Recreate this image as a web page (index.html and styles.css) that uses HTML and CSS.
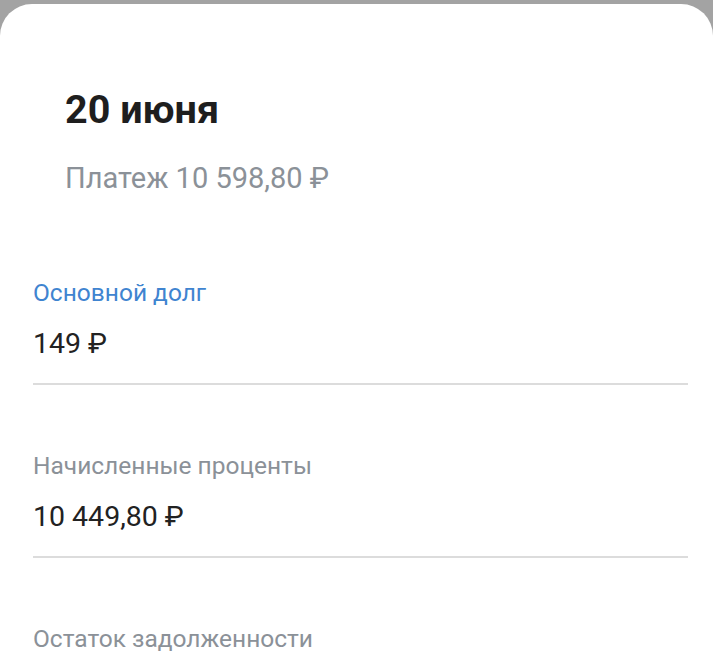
FILE: index.html
```html
<!DOCTYPE html>
<html lang="ru">
<head>
    <meta charset="UTF-8">
    <meta name="viewport" content="width=device-width, initial-scale=1.0">
    <title>Платеж 20 июня</title>
    <link rel="stylesheet" href="styles.css">
</head>
<body>
    <div class="sheet">
        <div class="header">
            <h1 class="date">20 июня</h1>
            <div class="payment">Платеж 10 598,80 ₽</div>
        </div>
        <div class="row">
            <div class="label label-accent">Основной долг</div>
            <div class="value">149 ₽</div>
        </div>
        <div class="row">
            <div class="label">Начисленные проценты</div>
            <div class="value">10 449,80 ₽</div>
        </div>
        <div class="row row-last">
            <div class="label">Остаток задолженности</div>
        </div>
    </div>
</body>
</html>
```

FILE: styles.css
```css
body {
    font-family: 'Roboto', 'Noto Sans', sans-serif;
    margin: 0;
    padding: 0;
    background-color: #a3a3a3;
}
.sheet {
    margin-top: 4px;
    background-color: #ffffff;
    border-radius: 32px 32px 0 0;
    padding: 84px 25px 0 33px;
    min-height: calc(100vh - 88px);
}
.header {
    padding-left: 32px;
    margin-bottom: 18px;
}
.date {
    margin: 0;
    font-size: 39.5px;
    line-height: 44px;
    font-weight: 700;
    color: #1e1e1e;
}
.payment {
    margin-top: 30px;
    font-size: 29px;
    line-height: 32px;
    color: #8b9198;
}
.row {
    padding: 66px 0 23px;
    border-bottom: 2px solid #dcdcdc;
}
.row-last {
    padding-bottom: 0;
    border-bottom: none;
}
.label {
    font-size: 24.5px;
    line-height: 30px;
    color: #8b9198;
}
.label-accent {
    color: #3f84d0;
}
.value {
    margin-top: 20px;
    font-size: 28.5px;
    line-height: 32px;
    color: #222222;
}
```
